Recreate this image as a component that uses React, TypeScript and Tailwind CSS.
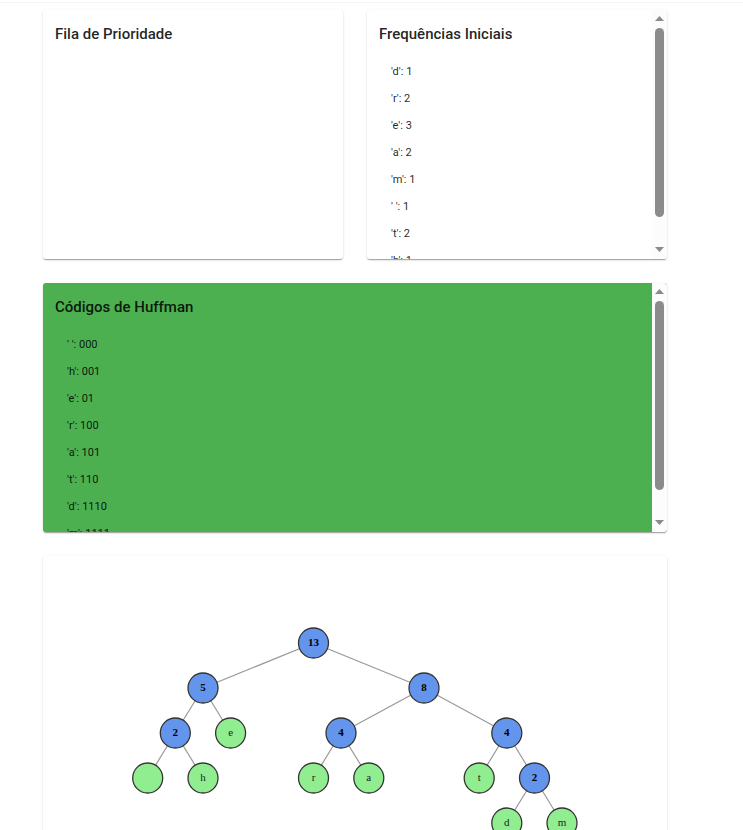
import React from "react";

type Entry = { symbol: string; value: string };

const frequencies: Entry[] = [
  { symbol: "d", value: "1" },
  { symbol: "r", value: "2" },
  { symbol: "e", value: "3" },
  { symbol: "a", value: "2" },
  { symbol: "m", value: "1" },
  { symbol: " ", value: "1" },
  { symbol: "t", value: "2" },
  { symbol: "h", value: "1" },
];

const codes: Entry[] = [
  { symbol: " ", value: "000" },
  { symbol: "h", value: "001" },
  { symbol: "e", value: "01" },
  { symbol: "r", value: "100" },
  { symbol: "a", value: "101" },
  { symbol: "t", value: "110" },
  { symbol: "d", value: "1110" },
  { symbol: "m", value: "1111" },
];

type TreeNode = {
  label: string;
  x: number;
  y: number;
  children?: TreeNode[];
};

const tree: TreeNode = {
  label: "13", x: 270.5, y: 87,
  children: [
    {
      label: "5", x: 160, y: 132,
      children: [
        {
          label: "2", x: 132.3, y: 177,
          children: [
            { label: " ", x: 104.7, y: 222 },
            { label: "h", x: 160, y: 222 },
          ],
        },
        { label: "e", x: 187.6, y: 177 },
      ],
    },
    {
      label: "8", x: 381, y: 132,
      children: [
        {
          label: "4", x: 298, y: 177,
          children: [
            { label: "r", x: 270.5, y: 222 },
            { label: "a", x: 325.8, y: 222 },
          ],
        },
        {
          label: "4", x: 463.8, y: 177,
          children: [
            { label: "t", x: 436.2, y: 222 },
            {
              label: "2", x: 491.5, y: 222,
              children: [
                { label: "d", x: 463.8, y: 267 },
                { label: "m", x: 519, y: 267 },
              ],
            },
          ],
        },
      ],
    },
  ],
};

const elevation =
  "rounded-[3px] shadow-[0_2px_1px_-1px_rgba(0,0,0,0.2),0_1px_1px_0_rgba(0,0,0,0.14),0_1px_3px_0_rgba(0,0,0,0.12)]";

function Scrollbar() {
  return (
    <div aria-hidden="true" className="flex w-[15px] shrink-0 flex-col items-center bg-[#fcfcfc] pt-1.5 pb-[7px]">
      <svg width="9" height="5" viewBox="0 0 9 5" className="shrink-0" fill="#8b8b8b">
        <path d="M4.5 0 9 5H0z" />
      </svg>
      <div className="mt-[7px] h-[189px] w-[9px] rounded-full bg-[#8b8b8b]" />
      <svg width="9" height="5" viewBox="0 0 9 5" className="mt-auto shrink-0" fill="#8b8b8b">
        <path d="M4.5 5 9 0H0z" />
      </svg>
    </div>
  );
}

function Panel({ title, items, green }: { title: string; items: Entry[]; green?: boolean }) {
  return (
    <section className={`flex h-[249px] overflow-hidden ${elevation} ${green ? "bg-[#4caf50]" : "bg-white"}`}>
      <div className="min-w-0 flex-1 overflow-y-auto p-3 [scrollbar-width:none]">
        <h2 className="text-[15px] leading-6 font-medium">{title}</h2>
        <ul className="p-3">
          {items.map((item) => (
            <li key={item.symbol} className="h-[27px] py-1.5 text-[11px] leading-[15px] whitespace-pre">
              {`'${item.symbol}': ${item.value}`}
            </li>
          ))}
        </ul>
      </div>
      {items.length > 0 && <Scrollbar />}
    </section>
  );
}

function Edges({ node }: { node: TreeNode }) {
  return (
    <>
      {node.children?.map((child) => (
        <React.Fragment key={`${child.x}-${child.y}`}>
          <line x1={node.x} y1={node.y} x2={child.x} y2={child.y} stroke="#999" strokeWidth="1.2" />
          <Edges node={child} />
        </React.Fragment>
      ))}
    </>
  );
}

function Nodes({ node }: { node: TreeNode }) {
  const inner = Boolean(node.children);
  return (
    <>
      <circle cx={node.x} cy={node.y} r="15" fill={inner ? "#6495ed" : "#90ee90"} stroke="#333" strokeWidth="1.3" />
      <text
        x={node.x}
        y={node.y + 3}
        textAnchor="middle"
        className={inner ? "fill-black text-[11px] font-bold" : "fill-[#222] text-[11px]"}
      >
        {node.label}
      </text>
      {node.children?.map((child) => (
        <Nodes key={`${child.x}-${child.y}`} node={child} />
      ))}
    </>
  );
}

export default function App() {
  return (
    <main className="h-screen overflow-y-auto bg-white font-[Roboto,sans-serif] text-black/87 [scrollbar-width:none]">
      <div className="h-[3px] border-b border-[#f3f3f3]" />
      <div className="grid grid-cols-2 gap-6 pt-[7px] pr-[76px] pb-6 pl-[43px]">
        <Panel title="Fila de Prioridade" items={[]} />
        <Panel title="Frequências Iniciais" items={frequencies} />
        <div className="col-span-2">
          <Panel title="Códigos de Huffman" items={codes} green />
        </div>
        <section className={`col-span-2 overflow-hidden bg-white ${elevation}`}>
          <svg
            width="624"
            height="375"
            viewBox="0 0 624 375"
            className="font-['Liberation_Serif',serif]"
            role="img"
            aria-label="Árvore de Huffman"
          >
            <Edges node={tree} />
            <Nodes node={tree} />
          </svg>
        </section>
      </div>
    </main>
  );
}
